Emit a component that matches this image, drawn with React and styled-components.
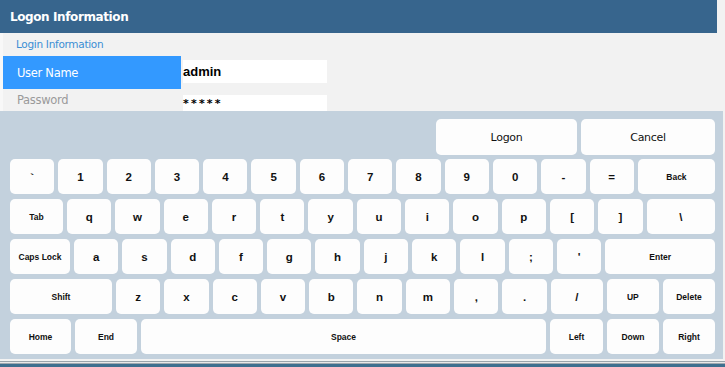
import React from 'react';
import styled, { createGlobalStyle } from 'styled-components';

const Global = createGlobalStyle`
  html, body {
    margin: 0;
    padding: 0;
    background: #f2f2f2;
    width: 725px;
    height: 367px;
    overflow: hidden;
  }
`;

const Page = styled.div`
  display: flex;
  flex-direction: column;
  width: 725px;
  height: 367px;
  background: #f2f2f2;
  font-family: "DejaVu Sans", Verdana, sans-serif;
`;

const Header = styled.div`
  width: 717px;
  height: 33px;
  background: #37658d;
  color: #fff;
  font-weight: bold;
  font-size: 12px;
  letter-spacing: -0.4px;
  display: flex;
  align-items: center;
  padding-left: 10px;
  box-sizing: border-box;
`;

const Form = styled.div`
  display: flex;
  flex-direction: column;
  height: 78px;
  border-left: 3px solid #f8f8f8;
`;

const Section = styled.div`
  height: 22px;
  display: flex;
  align-items: center;
  padding-left: 13px;
  font-size: 10.5px;
  letter-spacing: -0.3px;
  color: #3a8ed4;
`;

const Row = styled.div`
  display: flex;
  align-items: center;
  height: ${p => p.h}px;
  margin-top: ${p => p.mt || 0}px;
`;

const Label = styled.div`
  width: 178px;
  height: 100%;
  display: flex;
  align-items: center;
  padding-left: 14px;
  box-sizing: border-box;
  font-size: 11.5px;
  letter-spacing: -0.3px;
  color: ${p => (p.active ? '#fff' : '#9a9a9a')};
  background: ${p => (p.active ? '#3399ff' : 'transparent')};
`;

const Field = styled.div`
  margin-left: 2px;
  width: 144px;
  height: ${p => p.h}px;
  margin-top: ${p => p.mt || 0}px;
  background: #fff;
  display: flex;
  align-items: center;
  font-family: ${p => (p.mask ? '"DejaVu Sans", sans-serif' : '"Liberation Sans", Arial, sans-serif')};
  font-weight: bold;
  font-size: ${p => p.fs}px;
  letter-spacing: ${p => (p.mask ? '2.2px' : '0')};
  color: #000;
`;

const Board = styled.div`
  width: 723px;
  height: 248px;
  background: #c3d1dd;
  display: flex;
  flex-direction: column;
  gap: 5px;
  padding: 8px 8px 0 10px;
  box-sizing: border-box;
`;

const Actions = styled.div`
  display: flex;
  justify-content: flex-end;
  gap: 4px;
  margin-bottom: -1px;
`;

const Action = styled.div`
  width: ${p => p.w}px;
  height: 36px;
  background: #fdfdfd;
  border-radius: 5px;
  display: flex;
  align-items: center;
  justify-content: center;
  font-size: 11px;
  letter-spacing: -0.3px;
  color: #111;
`;

const KeyRow = styled.div`
  display: flex;
  gap: 4px;
  height: 35px;
`;

const Key = styled.div`
  flex: ${p => (p.grow ? '1 1 0' : `0 0 ${p.w || 44.3}px`)};
  background: #fdfdfd;
  border-radius: 5px;
  display: flex;
  align-items: center;
  justify-content: center;
  font-family: "Liberation Sans", Arial, sans-serif;
  font-weight: bold;
  font-size: ${p => (p.word ? '8.5px' : '11.5px')};
  color: #111;
`;

const Footer = styled.div`
  margin-top: 2px;
  border-top: 1px solid #9aa4ab;
  border-bottom: 1px solid #a0a8b0;
  height: 1px;
  background: #e8e8e8;
`;

const Taskbar = styled.div`
  flex: 1;
  background: #3e6f8f;
`;

const rows = [
  [...'`1234567890-='.split('').map(c => ({ t: c })), { t: 'Back', word: true, grow: true }],
  [{ t: 'Tab', word: true, w: 53 }, ...'qwertyuiop[]'.split('').map(c => ({ t: c })), { t: '\\', grow: true }],
  [{ t: 'Caps Lock', word: true, w: 60 }, ...'asdfghjkl;\''.split('').map(c => ({ t: c })), { t: 'Enter', word: true, grow: true }],
  [
    { t: 'Shift', word: true, w: 102 },
    ...'zxcvbnm,.'.split('').map(c => ({ t: c })),
    { t: '/', grow: true },
    { t: 'UP', word: true, grow: true },
    { t: 'Delete', word: true, grow: true },
  ],
  [
    { t: 'Home', word: true, w: 61 },
    { t: 'End', word: true, w: 62 },
    { t: 'Space', word: true, grow: true },
    { t: 'Left', word: true, w: 53 },
    { t: 'Down', word: true, w: 52 },
    { t: 'Right', word: true, w: 52 },
  ],
];

export default function App() {
  return (
    <Page>
      <Global />
      <Header>Logon Information</Header>
      <Form>
        <Section>Login Information</Section>
        <Row h={33} mt={1}>
          <Label active>User Name</Label>
          <Field h={23} mt={-3} fs={13}>admin</Field>
        </Row>
        <Row h={22}>
          <Label>Password</Label>
          <Field h={16} mt={6} fs={11} mask>*****</Field>
        </Row>
      </Form>
      <Board>
        <Actions>
          <Action w={141}>Logon</Action>
          <Action w={134}>Cancel</Action>
        </Actions>
        {rows.map((r, i) => (
          <KeyRow key={i}>
            {r.map((k, j) => (
              <Key key={j} w={k.w} grow={k.grow} word={k.word}>{k.t}</Key>
            ))}
          </KeyRow>
        ))}
      </Board>
      <Footer />
      <Taskbar />
    </Page>
  );
}
